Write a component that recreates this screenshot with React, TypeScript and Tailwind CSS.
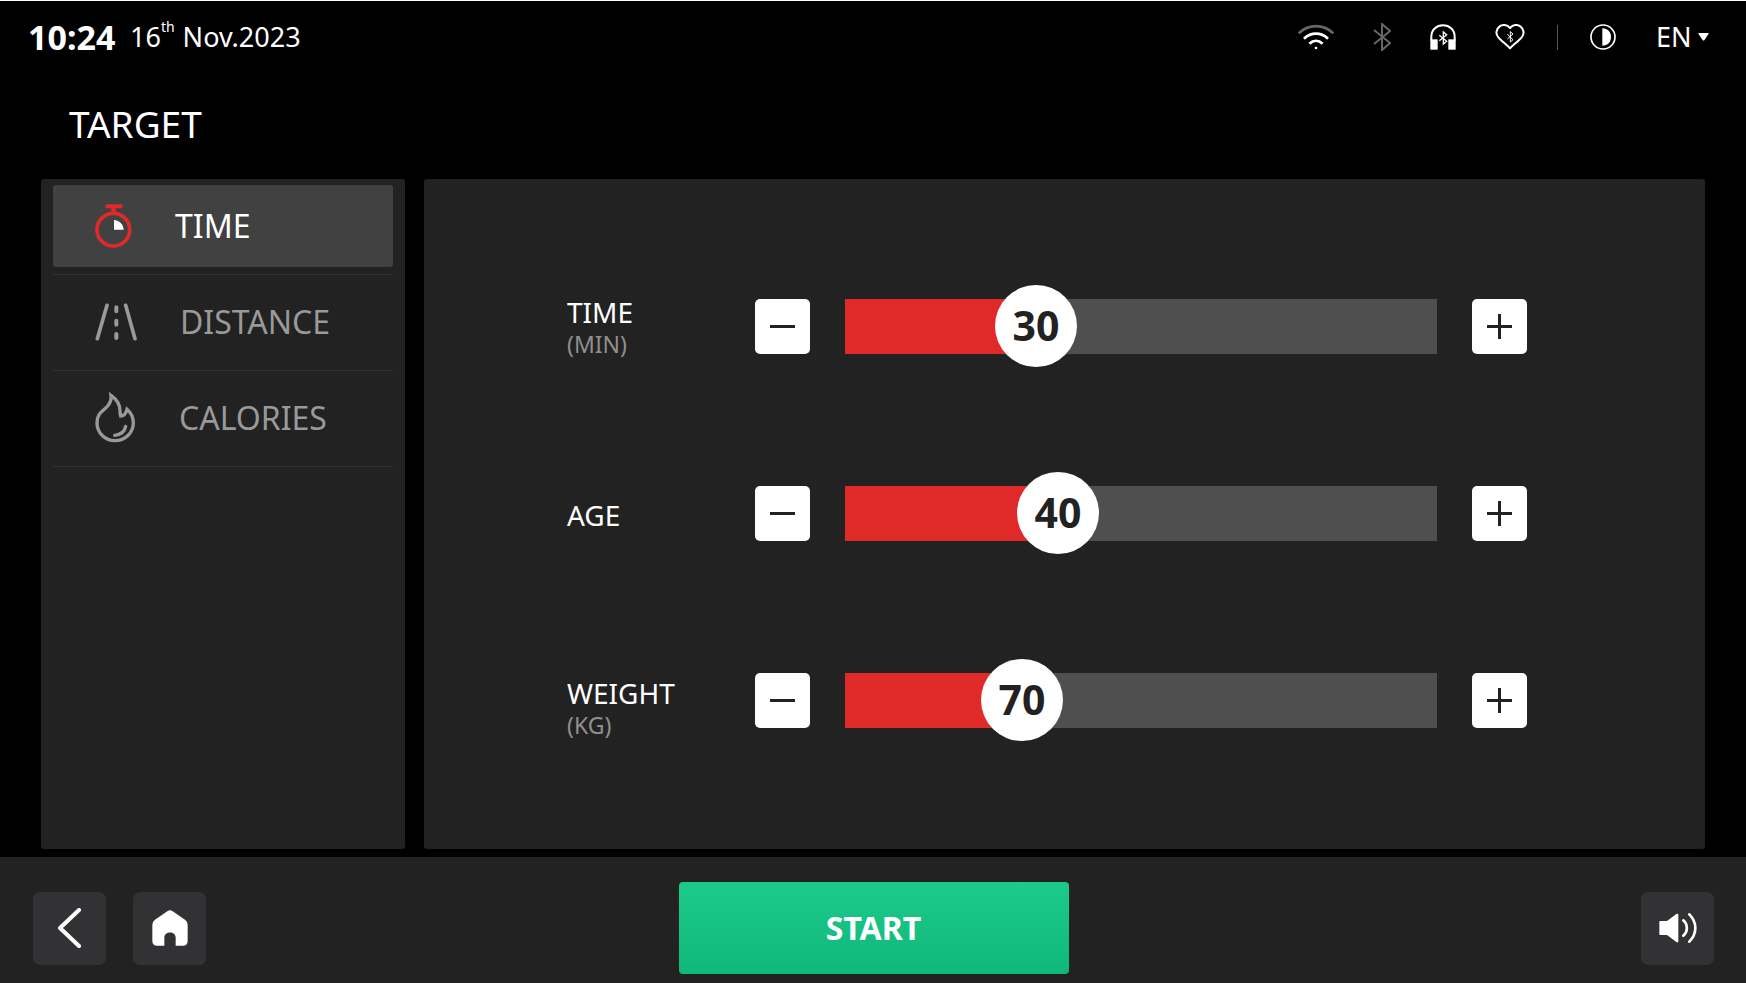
import React, { useState } from "react";

const BT_PATH = "M1 7 L17 20 L9 27 V1 L17 8 L1 21";

const WifiIcon = () => (
  <svg width="36" height="26" viewBox="0 0 108 78" fill="none">
    <path d="M2 28 C32 -1 76 -1 106 28" stroke="#666" strokeWidth="8" />
    <path d="M18 44 C39 24 69 24 90 44" stroke="#fff" strokeWidth="8" />
    <path d="M34 59 C46 48 62 48 74 59" stroke="#fff" strokeWidth="8" />
    <circle cx="54" cy="72" r="4" fill="#fff" />
  </svg>
);

const BluetoothIcon = () => (
  <svg width="18" height="28" viewBox="0 0 18 28" fill="none" stroke="#666" strokeWidth="2">
    <path d={BT_PATH} />
  </svg>
);

const HeadphonesIcon = () => (
  <svg width="26" height="26" viewBox="0 0 78 78" fill="none">
    <path d="M4 50 V38 C4 18 19 4 39 4 C59 4 74 18 74 38 V50" stroke="#fff" strokeWidth="6" />
    <rect x="1" y="46" width="22" height="31" fill="#fff" />
    <rect x="55" y="46" width="22" height="31" fill="#fff" />
    <path d="M28 34 L50 52 L40 60 V24 L50 32 L28 50" stroke="#fff" strokeWidth="4" />
  </svg>
);

const HeartIcon = () => (
  <svg width="30" height="26" viewBox="0 0 90 78" fill="none">
    <path
      d="M45 12 C36 1 22 1 14 7 C3 15 1 30 10 40 C20 51 34 62 45 73 C56 62 70 51 80 40 C89 30 87 15 76 7 C68 1 54 1 45 12 Z"
      stroke="#fff"
      strokeWidth="6"
      strokeLinejoin="round"
    />
    <path d="M37 31 L54 47 L46 54 V23 L54 30 L37 45" stroke="#fff" strokeWidth="3" />
  </svg>
);

const ContrastIcon = () => (
  <svg width="26" height="26" viewBox="0 0 78 78" fill="none">
    <circle cx="39" cy="39" r="36" stroke="#fff" strokeWidth="5" />
    <path d="M37 13 C53 13 63 24 63 39 C63 54 53 65 37 65 Z" fill="#fff" />
  </svg>
);

const StopwatchIcon = () => (
  <svg width="37" height="44" viewBox="0 0 111 132" fill="none">
    <path d="M32 1 H82 V13 H62 V26 H49 V13 H32 Z" fill="#e02a2a" />
    <circle cx="55" cy="77" r="49" stroke="#e02a2a" strokeWidth="11" />
    <path d="M57 48 C73 49 85 61 86 77 H57 Z" fill="#fff" />
  </svg>
);

const RoadIcon = () => (
  <svg width="42" height="38" viewBox="0 0 126 114" fill="none" stroke="#999" strokeLinecap="round">
    <path d="M36 7 L7 107 M92 7 L120 107" strokeWidth="11" />
    <path d="M64 13 V25 M64 53 V65 M64 93 V105" strokeWidth="12" />
  </svg>
);

const FlameIcon = () => (
  <svg width="41" height="52" viewBox="0 0 123 156" fill="none" stroke="#999" strokeWidth="10">
    <path d="M48 10 C65 22 75 38 75 56 Q75 66 77 72 C87 72 93 64 96 52 C110 64 115 78 115 93 C115 122 90 146 60 146 C30 146 6 122 6 93 C6 62 24 58 38 42 C47 32 50 24 48 10 Z" />
    <path d="M59 130 C77 128 89 119 92 103" strokeLinecap="round" />
  </svg>
);

const BackIcon = () => (
  <svg width="24" height="40" viewBox="0 0 24 40" fill="none">
    <path d="M21 2 L2 20 L21 38" stroke="#fff" strokeWidth="4" strokeLinecap="round" strokeLinejoin="round" />
  </svg>
);

const HomeIcon = () => (
  <svg width="36" height="36" viewBox="0 0 108 108" fill="#fff">
    <path d="M47 3 Q54 -1 61 3 L99 29 Q107 35 107 44 V92 Q107 107 92 107 H71 V83 C71 62 37 62 37 83 V107 H16 Q1 107 1 92 V44 Q1 35 9 29 Z" />
  </svg>
);

const VolumeIcon = () => (
  <svg width="38" height="30" viewBox="0 0 114 90" fill="none">
    <path d="M1 27 Q1 24 4 24 H24 L52 3 Q58 0 58 5 V85 Q58 90 52 87 L24 66 H4 Q1 66 1 63 Z" fill="#fff" />
    <path d="M73 22 C87 34 87 56 73 68 M91 4 C115 28 115 62 91 86" stroke="#fff" strokeWidth="8" strokeLinecap="round" />
  </svg>
);

const MinusIcon = () => (
  <svg width="25" height="25" viewBox="0 0 25 25" className="stroke-[#222]" strokeWidth="3">
    <path d="M0 12.5 H25" />
  </svg>
);

const PlusIcon = () => (
  <svg width="25" height="25" viewBox="0 0 25 25" className="stroke-[#222]" strokeWidth="3">
    <path d="M0 12.5 H25 M12.5 0 V25" />
  </svg>
);

const menu = [
  { name: "TIME", Icon: StopwatchIcon },
  { name: "DISTANCE", Icon: RoadIcon },
  { name: "CALORIES", Icon: FlameIcon },
];

type SliderRowProps = {
  id: string;
  label: string;
  unit?: string;
  min: number;
  max: number;
  initial: number;
  labelClass?: string;
};

const SliderRow = ({ id, label, unit, min, max, initial, labelClass = "self-center" }: SliderRowProps) => {
  const [value, setValue] = useState(initial);
  const ratio = (value - min) / (max - min);

  return (
    <div className="flex h-[82px] items-center">
      <label htmlFor={id} className={`w-[188px] shrink-0 pt-1 text-[28px] leading-8 ${labelClass}`}>
        {label}
        {unit && <span className="block text-[23px] leading-8 text-[#8f8f8f]">{unit}</span>}
      </label>
      <button
        aria-label={`Decrease ${label}`}
        onClick={() => setValue(Math.max(min, value - 1))}
        className="flex h-[55px] w-[55px] shrink-0 items-center justify-center rounded-[5px] bg-white"
      >
        <MinusIcon />
      </button>
      <div className="relative mx-[35px] flex h-[82px] flex-1 items-center">
        <div className="h-[55px] w-full bg-[#4f4f4f]">
          <div className="h-full bg-[#e02a2a]" style={{ width: `calc(${ratio} * (100% - 82px) + 41px)` }} />
        </div>
        <output
          htmlFor={id}
          style={{ left: `calc(${ratio} * (100% - 82px))` }}
          className="absolute top-0 flex h-[82px] w-[82px] items-center justify-center rounded-full bg-white text-[41px] font-bold text-[#222]"
        >
          {value}
        </output>
        <input
          id={id}
          type="range"
          min={min}
          max={max}
          value={value}
          onChange={(e) => setValue(Number(e.target.value))}
          className="absolute inset-0 h-full w-full cursor-pointer opacity-0"
        />
      </div>
      <button
        aria-label={`Increase ${label}`}
        onClick={() => setValue(Math.min(max, value + 1))}
        className="flex h-[55px] w-[55px] shrink-0 items-center justify-center rounded-[5px] bg-white"
      >
        <PlusIcon />
      </button>
    </div>
  );
};

const TopBar = () => (
  <header className="flex h-[72px] items-center justify-between pl-7 pr-[37px]">
    <div className="flex items-center">
      <span className="w-[102px] text-[34px] font-bold">10:24</span>
      <span className="flex text-[27px]">
        16<span className="mr-2 text-[14px] leading-5">th</span>Nov.2023
      </span>
    </div>
    <div className="flex items-center">
      <div className="flex items-center gap-[39px]">
        <WifiIcon />
        <BluetoothIcon />
        <HeadphonesIcon />
        <HeartIcon />
      </div>
      <div className="mx-8 h-[25px] w-px bg-[#555]" />
      <button aria-label="Contrast">
        <ContrastIcon />
      </button>
      <div className="ml-10 flex items-center gap-1">
        <select aria-label="Language" className="w-[38px] appearance-none bg-transparent text-[27px] outline-none">
          <option>EN</option>
        </select>
        <svg width="11" height="8" viewBox="0 0 11 8" fill="#fff">
          <path d="M1 0 H10 Q11 0 10.5 1 L6.5 7 Q5.5 8 4.5 7 L0.5 1 Q0 0 1 0 Z" />
        </svg>
      </div>
    </div>
  </header>
);

const BarButton = ({ label, children }: { label: string; children: React.ReactNode }) => (
  <button
    aria-label={label}
    className="flex h-[73px] w-[73px] items-center justify-center rounded-[7px] bg-[#323234]"
  >
    {children}
  </button>
);

const App = () => {
  const [active, setActive] = useState("TIME");

  return (
    <div className="flex min-h-screen flex-col border-t border-white bg-black font-['Noto_Sans',sans-serif] text-white">
      <TopBar />
      <h1 className="pl-[69px] pt-[27px] text-[37px] leading-[48px]">TARGET</h1>

      <div className="flex flex-1 gap-[19px] px-[41px] pb-2 pt-[31px]">
        <nav className="w-[364px] shrink-0 rounded-[3px] bg-[#222] px-3">
          <ul>
            {menu.map(({ name, Icon }) => (
              <li key={name} className="flex h-24 border-b border-[#333] pb-[7px] pt-1.5">
                <button
                  onClick={() => setActive(name)}
                  className={`flex w-full items-center gap-[43px] rounded-[3px] pl-[42px] text-[32px] ${
                    active === name ? "bg-[#414141] text-white" : "text-[#999]"
                  }`}
                >
                  <Icon />
                  {name}
                </button>
              </li>
            ))}
          </ul>
        </nav>

        <main className="flex flex-1 flex-col justify-center gap-[105px] rounded-[3px] bg-[#222] pb-0.5 pl-[143px] pr-[178px]">
          <SliderRow id="time" label="TIME" unit="(MIN)" min={5} max={90} initial={30} />
          <SliderRow id="age" label="AGE" min={10} max={99} initial={40} />
          <SliderRow id="weight" label="WEIGHT" unit="(KG)" min={30} max={180} initial={70} labelClass="self-end" />
        </main>
      </div>

      <footer className="grid grid-cols-[1fr_390px_1fr] items-center bg-[#222] pb-[9px] pl-[33px] pr-8 pt-[25px]">
        <div className="flex gap-[27px]">
          <BarButton label="Back">
            <BackIcon />
          </BarButton>
          <BarButton label="Home">
            <HomeIcon />
          </BarButton>
        </div>
        <button className="h-[92px] rounded-[4px] bg-linear-to-b from-[#1bcb8b] to-[#10b77b] text-[32px] font-bold">
          START
        </button>
        <div className="flex justify-end">
          <BarButton label="Volume">
            <VolumeIcon />
          </BarButton>
        </div>
      </footer>
    </div>
  );
};

export default App;
